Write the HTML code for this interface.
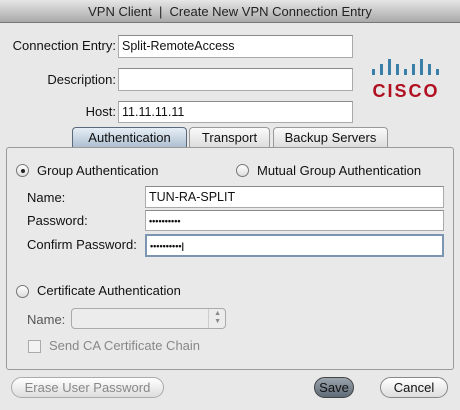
<!DOCTYPE html>
<html><head><style>
*{box-sizing:border-box;margin:0;padding:0}
body{width:460px;height:410px;background:#e8e8e8;font-family:"Liberation Sans",sans-serif;font-size:13px;color:#111;position:relative;overflow:hidden}
.a{position:absolute;white-space:nowrap}
.title{left:0;top:0;width:460px;height:23px;background:linear-gradient(#e6e6e6,#a9a9a9);border-bottom:1px solid #777;text-align:center;line-height:23px;font-size:13px;color:#222}
.in{position:absolute;background:#fff;border:1px solid #aaa;border-top-color:#8a8a8a;padding-left:3px;font-size:12.5px;line-height:20px}
.lab{text-align:right}
.tab{position:absolute;top:127px;height:20px;border:1px solid #999;border-bottom:none;border-radius:4px 4px 0 0;background:linear-gradient(#fafafa,#ddd);text-align:center;line-height:19px;font-size:13px}
.radio{position:absolute;width:13px;height:13px;border-radius:50%;border:1px solid #777;background:linear-gradient(#fff,#ddd)}
.btn{position:absolute;top:377px;height:21px;border:1px solid #888;border-radius:11px;background:linear-gradient(#fff,#ddd);text-align:center;line-height:19px;font-size:13px}
</style></head><body>
<div class="a title">VPN Client &nbsp;|&nbsp; Create New VPN Connection Entry</div>
<div class="a lab" style="right:344px;top:38px">Connection Entry:</div>
<div class="in" style="left:118px;top:35px;width:235px;height:23px">Split-RemoteAccess</div>
<div class="a lab" style="right:344px;top:72px">Description:</div>
<div class="in" style="left:118px;top:68px;width:235px;height:23px"></div>
<div class="a lab" style="right:344px;top:104px">Host:</div>
<div class="in" style="left:118px;top:101px;width:235px;height:22px">11.11.11.11</div>
<svg class="a" style="left:371px;top:57px" width="70" height="42">
<g fill="#3a7fa6">
<rect x="1" y="12" width="3" height="6"/><rect x="9" y="7" width="3" height="11"/><rect x="17" y="2" width="3" height="16"/><rect x="25" y="7" width="3" height="11"/><rect x="33" y="12" width="3" height="6"/><rect x="41" y="7" width="3" height="11"/><rect x="49" y="2" width="3" height="16"/><rect x="57" y="7" width="3" height="11"/><rect x="65" y="12" width="3" height="6"/></g>
<text x="35" y="40" text-anchor="middle" font-family="Liberation Sans" font-weight="bold" font-size="18" fill="#b01020" letter-spacing="2">CISCO</text></svg>
<div class="a" style="left:6px;top:147px;width:448px;height:223px;border:1px solid #9a9a9a;border-radius:3px;background:#e9e9e9"></div>
<div class="tab" style="left:72px;width:115px;background:linear-gradient(#e6eef6,#aebfd0);border-color:#5a6a7a">Authentication</div>
<div class="tab" style="left:189px;width:81px">Transport</div>
<div class="tab" style="left:273px;width:115px">Backup Servers</div>
<div class="radio" style="left:16px;top:164px"><div style="position:absolute;left:4px;top:4px;width:4px;height:4px;border-radius:50%;background:#222"></div></div>
<div class="a" style="left:37px;top:163px">Group Authentication</div>
<div class="radio" style="left:236px;top:164px"></div>
<div class="a" style="left:257px;top:163px">Mutual Group Authentication</div>
<div class="a" style="left:27px;top:190px">Name:</div>
<div class="in" style="left:145px;top:186px;width:299px;height:22px">TUN-RA-SPLIT</div>
<div class="a" style="left:27px;top:213px">Password:</div>
<div class="in" style="left:145px;top:210px;width:299px;height:21px;font-size:9px;font-weight:bold">••••••••••</div>
<div class="a" style="left:27px;top:237px">Confirm Password:</div>
<div class="in" style="left:145px;top:234px;width:299px;height:23px;font-size:9px;font-weight:bold;border:2px solid #7c95b0">••••••••••|</div>
<div class="radio" style="left:16px;top:285px"></div>
<div class="a" style="left:37px;top:283px">Certificate Authentication</div>
<div class="a" style="left:27px;top:312px;color:#555">Name:</div>
<div class="a" style="left:71px;top:308px;width:155px;height:21px;border:1px solid #aaa;border-radius:4px;background:#ececec"><div style="position:absolute;right:16px;top:0;width:1px;height:19px;background:#ccc"></div><div style="position:absolute;right:4px;top:1px;font-size:7px;color:#888;line-height:8px">▲<br>▼</div></div>
<div class="a" style="left:28px;top:340px;width:13px;height:13px;border:1px solid #aaa;background:#f3f3f3"></div>
<div class="a" style="left:49px;top:338px;color:#888">Send CA Certificate Chain</div>
<div class="btn" style="left:11px;width:153px;color:#888;border-color:#aaa">Erase User Password</div>
<div class="btn" style="left:314px;width:40px;background:linear-gradient(#9aa4ae,#5e6a76);border-color:#444">Save</div>
<div class="btn" style="left:380px;width:68px">Cancel</div>
</body></html>
